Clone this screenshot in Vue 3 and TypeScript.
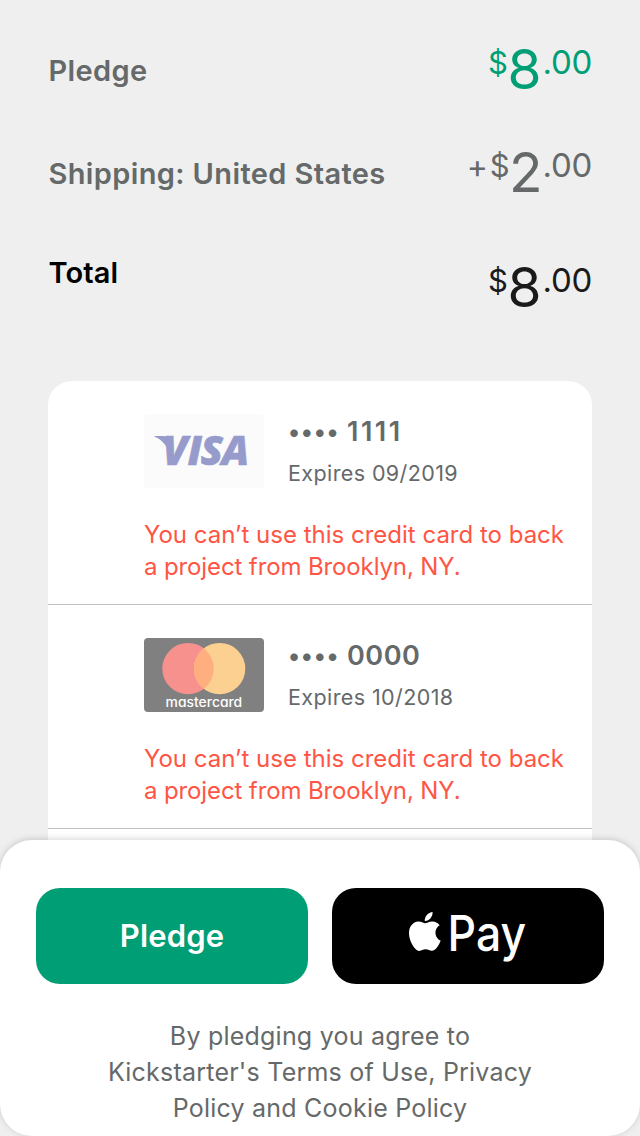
<script setup lang="ts">
interface Amount {
  label: string
  tone: 'pledge' | 'shipping' | 'total'
  prefix?: string
  whole: string
  cents: string
}

interface StoredCard {
  brand: 'visa' | 'mastercard'
  lastFour: string
  expires: string
}

const amounts: Amount[] = [
  { label: 'Pledge', tone: 'pledge', whole: '8', cents: '.00' },
  { label: 'Shipping: United States', tone: 'shipping', prefix: '+', whole: '2', cents: '.00' },
  { label: 'Total', tone: 'total', whole: '8', cents: '.00' },
]

const cards: StoredCard[] = [
  { brand: 'visa', lastFour: '1111', expires: 'Expires 09/2019' },
  { brand: 'mastercard', lastFour: '0000', expires: 'Expires 10/2018' },
]
</script>

<template>
  <main class="screen">
    <div class="scroll">
      <section class="summary">
        <div v-for="a in amounts" :key="a.label" class="row" :class="a.tone">
          <span class="label">{{ a.label }}</span>
          <span class="price">
            <span v-if="a.prefix" class="prefix">{{ a.prefix }}</span>
            <span class="currency">$</span>
            <span class="whole">{{ a.whole }}</span>
            <span class="cents">{{ a.cents }}</span>
          </span>
        </div>
      </section>

      <section class="cards">
        <article v-for="card in cards" :key="card.lastFour" class="card">
          <div class="card-head">
            <svg v-if="card.brand === 'visa'" class="brand" viewBox="0 0 120 74">
              <rect width="120" height="74" rx="4" fill="#fbfbfb" />
              <path d="M10.6 21.9H19Q22.6 22.1 23.6 25.6L28.4 46Q22.5 27 10.6 22.7Z" fill="#969bcc" />
              <text class="visa" x="18.6 43.4 56.4 77.6" y="51.4">VISA</text>
            </svg>
            <svg v-else class="brand" viewBox="0 0 120 74">
              <rect width="120" height="74" rx="4" fill="#808080" />
              <circle cx="44" cy="30.6" r="25.7" fill="#f6918e" />
              <circle cx="75.6" cy="30.6" r="25.7" fill="#fbd090" />
              <path d="M59.8 10.33a25.7 25.7 0 0 1 0 40.54a25.7 25.7 0 0 1 0-40.54z" fill="#ffae80" />
              <text class="mc" x="21.6" y="69" textLength="76.6" lengthAdjust="spacingAndGlyphs">mastercard</text>
            </svg>
            <div class="info">
              <div class="number">
                <span class="dots">••••</span>
                <span class="digits" :class="card.brand">{{ card.lastFour }}</span>
              </div>
              <div class="expires">{{ card.expires }}</div>
            </div>
          </div>
          <p class="error">
            <span>You can’t use this credit card to back</span><br />
            <span class="tight">a project from Brooklyn, NY.</span>
          </p>
        </article>
      </section>
    </div>

    <footer class="sheet">
      <div class="buttons">
        <button class="btn primary" type="button">Pledge</button>
        <button class="btn apple" type="button" aria-label="Apple Pay">
          <svg width="144" height="80" viewBox="-12 -12 144 80">
            <path
              transform="translate(-2.6 4) scale(1.62)"
              fill="#fff"
              d="M12.152 6.896c-.948 0-2.415-1.078-3.96-1.04-2.04.027-3.91 1.183-4.961 3.014-2.117 3.675-.546 9.103 1.519 12.09 1.013 1.454 2.208 3.09 3.792 3.039 1.52-.065 2.09-.987 3.935-.987 1.831 0 2.35.987 3.96.948 1.637-.026 2.676-1.48 3.676-2.948 1.156-1.688 1.636-3.325 1.662-3.415-.039-.013-3.182-1.221-3.22-4.857-.026-3.04 2.48-4.494 2.597-4.559-1.429-2.09-3.623-2.324-4.39-2.376-2-.156-3.675 1.09-4.61 1.09zM15.53 3.83c.843-1.012 1.4-2.427 1.245-3.83-1.207.052-2.662.805-3.532 1.818-.78.896-1.454 2.338-1.273 3.714 1.338.104 2.715-.688 3.559-1.701"
            />
            <text class="pay" x="39.6" y="42.8" textLength="78.5" lengthAdjust="spacingAndGlyphs">Pay</text>
          </svg>
        </button>
      </div>
      <p class="legal">By pledging you agree to<br />Kickstarter's Terms of Use, Privacy<br />Policy and Cookie Policy</p>
    </footer>
  </main>
</template>

<style>
body {
  background: #efefef;
}
</style>

<style scoped>
.screen {
  width: 640px;
  height: 1136px;
  overflow: hidden;
  background: #efefef;
  font-family: Inter, "Liberation Sans", sans-serif;
  color: #656969;
}
.scroll {
  height: 840px;
  overflow: hidden;
}
.summary {
  box-sizing: border-box;
  height: 381px;
  padding: 19px 48px 0;
}
.row {
  display: flex;
  justify-content: space-between;
  align-items: flex-start;
  height: 103px;
}
.label {
  padding-left: 0.4px;
  font-size: 29px;
  font-weight: 600;
  line-height: 103px;
  letter-spacing: 0.38px;
  white-space: nowrap;
}
.price {
  display: flex;
  align-items: flex-start;
  padding-top: 23.4px;
}
.whole {
  font-size: 55px;
  line-height: 54px;
  margin-right: 1.2px;
}
.currency {
  font-size: 31px;
  line-height: 41.4px;
  margin-right: -0.6px;
}
.prefix {
  font-size: 32px;
  line-height: 43px;
  margin-right: 1.8px;
}
.cents {
  font-size: 33px;
  line-height: 40.2px;
  letter-spacing: -0.3px;
}
.pledge .price {
  color: #009e74;
}
.shipping .whole {
  margin-right: 0;
}
.total .label {
  color: #000;
  line-height: 96.4px;
  letter-spacing: 0.12px;
}
.total .price {
  color: #1a1a1a;
  padding-top: 35.4px;
}
.cards {
  margin: 0 48px;
  height: 500px;
  border-radius: 24px 24px 0 0;
  background: #fff;
}
.card {
  box-sizing: border-box;
  height: 224px;
  padding: 33px 0 0 96px;
  border-bottom: 1px solid #c2c2c4;
}
.card-head {
  display: flex;
  gap: 24px;
  height: 74px;
}
.brand {
  width: 120px;
  height: 74px;
  flex: none;
}
.brand .visa {
  font: italic 800 41px "Open Sans", sans-serif;
  fill: #969bcc;
  stroke: #969bcc;
  stroke-width: 0.5px;
}
.mc {
  font: 500 13px Inter, sans-serif;
  font-feature-settings: "cv11";
  fill: #fff;
}
.info {
  padding-top: 2.2px;
}
.number {
  display: flex;
  font-size: 27px;
  font-weight: 600;
  line-height: 32px;
}
.dots {
  width: 59px;
  box-sizing: border-box;
  font-size: 24px;
  line-height: 32px;
  letter-spacing: 0.75px;
}
.digits.visa {
  letter-spacing: 2.5px;
}
.digits.mastercard {
  letter-spacing: 0.52px;
}
.expires {
  margin-top: 12px;
  font-size: 21.5px;
  line-height: 26px;
  letter-spacing: 0.4px;
}
.error {
  margin: 31.3px 0 0;
  font-size: 24px;
  line-height: 32px;
  color: #ff5544;
  white-space: nowrap;
}
.tight {
  letter-spacing: -0.12px;
}
.sheet {
  position: relative;
  box-sizing: border-box;
  height: 296px;
  padding: 48px 36px 0;
  border-radius: 32px;
  background: #fff;
  box-shadow: 0 -1px 6px rgba(0, 0, 0, 0.17);
}
.buttons {
  display: flex;
  gap: 24px;
}
.btn {
  display: flex;
  align-items: center;
  justify-content: center;
  flex: 1;
  height: 96px;
  padding: 0;
  border: 0;
  border-radius: 24px;
  font: 600 31px Inter, "Liberation Sans", sans-serif;
  letter-spacing: 0.16px;
  color: #fff;
}
.primary {
  padding-bottom: 2px;
  background: #009e74;
}
.apple {
  background: #000;
}
.pay {
  font: 500 49.5px Inter, sans-serif;
  letter-spacing: 0;
  fill: #fff;
}
.legal {
  margin: 33.6px 0 0;
  font-size: 25px;
  line-height: 36px;
  letter-spacing: 0.22px;
  text-align: center;
}
</style>
